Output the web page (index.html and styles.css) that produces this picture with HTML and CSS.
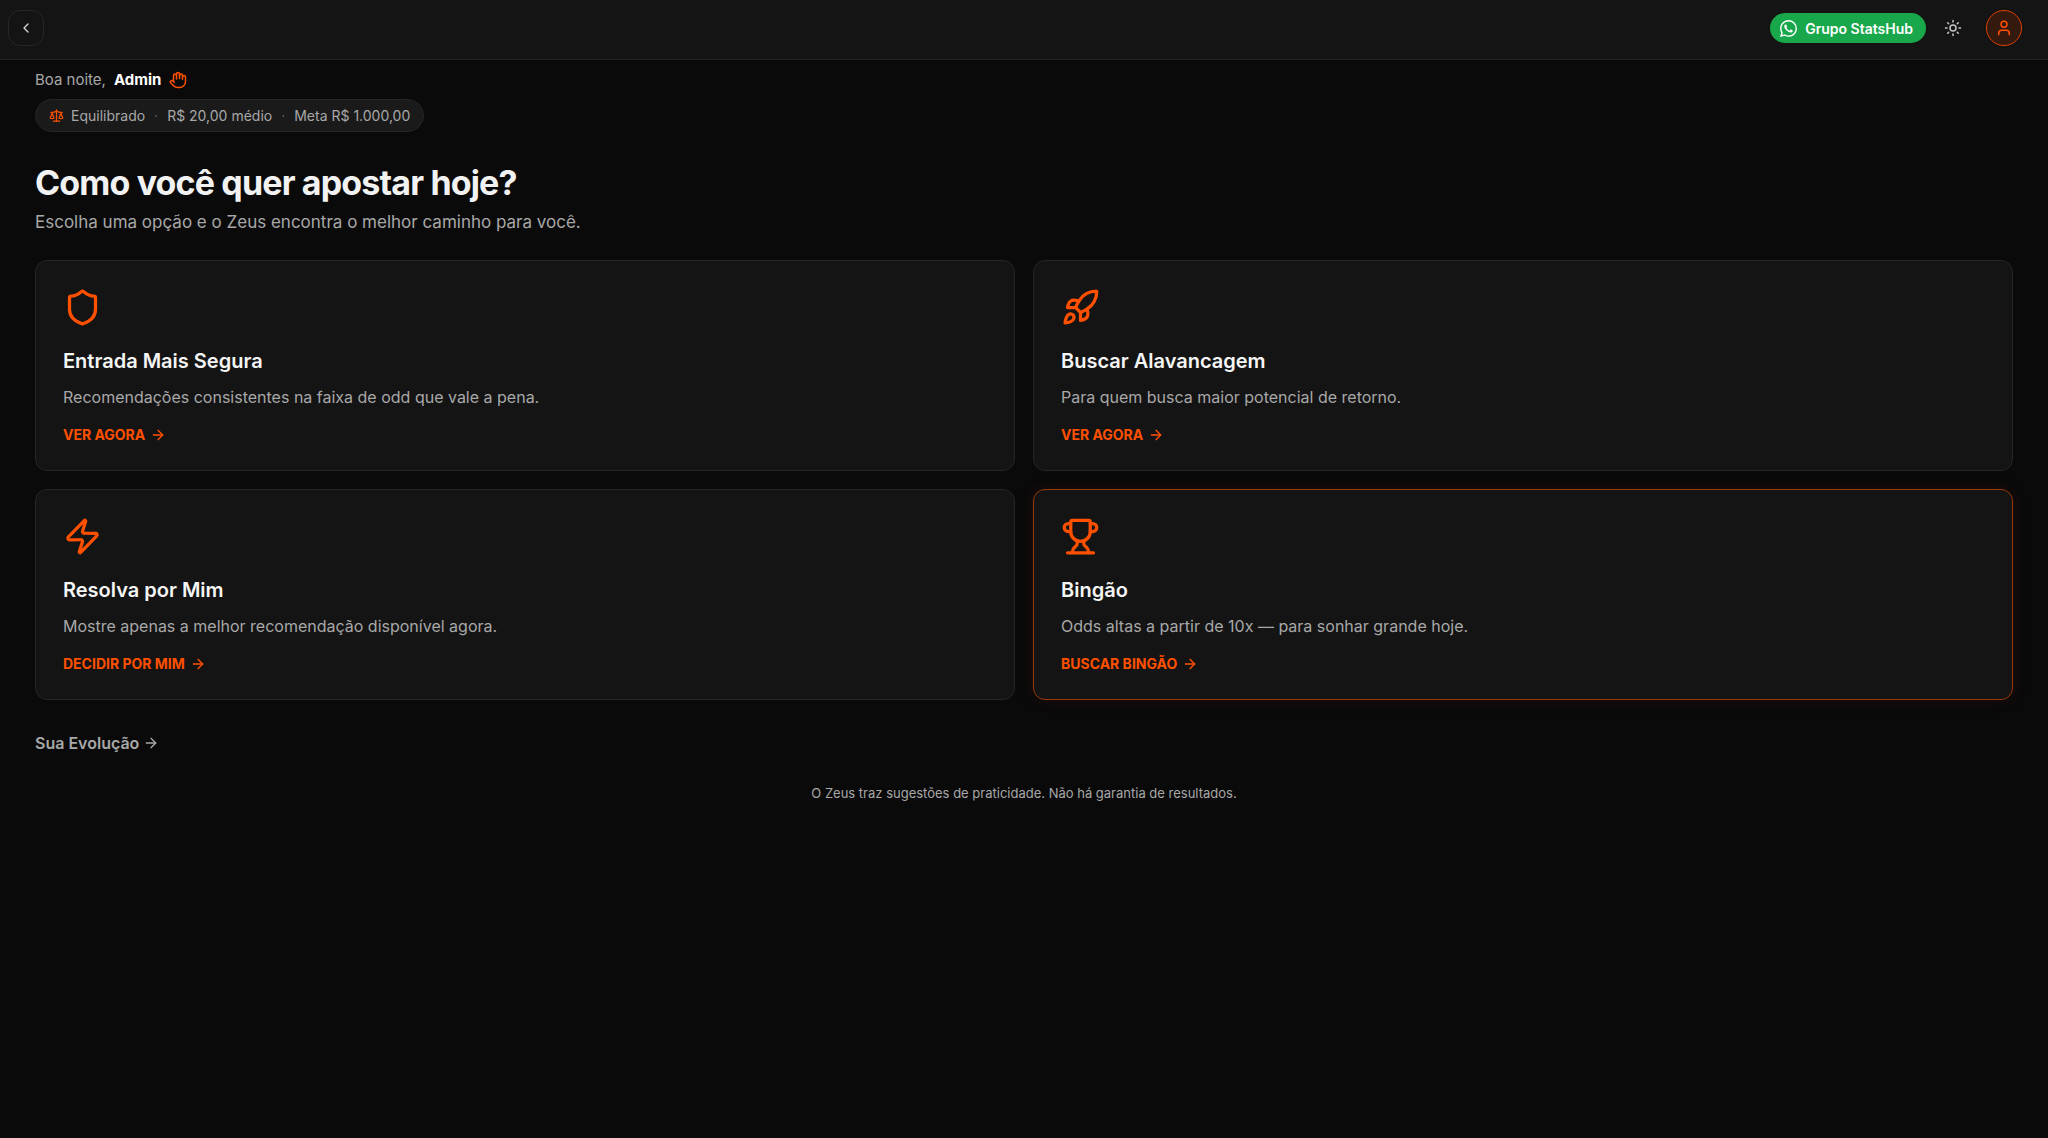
FILE: index.html
```html
<!DOCTYPE html>
<html lang="pt-BR">
<head>
  <meta charset="UTF-8">
  <meta name="viewport" content="width=device-width, initial-scale=1.0">
  <title>Zeus - StatsHub</title>
  <link rel="stylesheet" href="styles.css">
</head>
<body>
  <header class="topbar">
    <button class="back-btn" type="button" aria-label="Voltar">
      <svg class="icon icon-sm" viewBox="0 0 24 24"><path d="m15 18-6-6 6-6"/></svg>
    </button>
    <div class="topbar-actions">
      <a class="group-btn" href="#">
        <svg class="whatsapp" viewBox="0 0 24 24"><path d="M17.472 14.382c-.297-.149-1.758-.867-2.03-.967-.273-.099-.471-.148-.67.15-.197.297-.767.966-.94 1.164-.173.199-.347.223-.644.075-.297-.15-1.255-.463-2.39-1.475-.883-.788-1.48-1.761-1.653-2.059-.173-.297-.018-.458.13-.606.134-.133.298-.347.446-.52.149-.174.198-.298.298-.497.099-.198.05-.371-.025-.52-.075-.149-.669-1.612-.916-2.207-.242-.579-.487-.5-.669-.51-.173-.008-.371-.01-.57-.01-.198 0-.52.074-.792.372-.272.297-1.04 1.016-1.04 2.479 0 1.462 1.065 2.875 1.213 3.074.149.198 2.096 3.2 5.077 4.487.709.306 1.262.489 1.694.625.712.227 1.36.195 1.871.118.571-.085 1.758-.719 2.006-1.413.248-.694.248-1.289.173-1.413-.074-.124-.272-.198-.57-.347m-5.421 7.403h-.004a9.87 9.87 0 0 1-5.031-1.378l-.361-.214-3.741.982.998-3.648-.235-.374a9.86 9.86 0 0 1-1.51-5.26c.001-5.45 4.436-9.884 9.888-9.884 2.64 0 5.122 1.03 6.988 2.898a9.825 9.825 0 0 1 2.893 6.994c-.003 5.45-4.437 9.884-9.885 9.884m8.413-18.297A11.815 11.815 0 0 0 12.05 0C5.495 0 .16 5.335.157 11.892c0 2.096.547 4.142 1.588 5.945L.057 24l6.305-1.654a11.882 11.882 0 0 0 5.683 1.448h.005c6.554 0 11.89-5.335 11.893-11.893a11.821 11.821 0 0 0-3.48-8.413Z"/></svg>
        Grupo StatsHub
      </a>
      <button class="theme-btn" type="button" aria-label="Alternar tema">
        <svg class="icon icon-md" viewBox="0 0 24 24"><circle cx="12" cy="12" r="4"/><path d="M12 2v2M12 20v2M4.93 4.93l1.41 1.41M17.66 17.66l1.41 1.41M2 12h2M20 12h2M6.34 17.66l-1.41 1.41M19.07 4.93l-1.41 1.41"/></svg>
      </button>
      <button class="avatar" type="button" aria-label="Perfil">
        <svg class="icon icon-md" viewBox="0 0 24 24"><path d="M19 21v-2a4 4 0 0 0-4-4H9a4 4 0 0 0-4 4v2"/><circle cx="12" cy="7" r="4"/></svg>
      </button>
    </div>
  </header>

  <main class="container">
    <p class="greeting">
      Boa noite, <strong>Admin</strong>
      <svg class="icon icon-md" viewBox="0 0 24 24"><path d="M18 11V6a2 2 0 0 0-2-2a2 2 0 0 0-2 2"/><path d="M14 10V4a2 2 0 0 0-2-2a2 2 0 0 0-2 2v2"/><path d="M10 10.5V6a2 2 0 0 0-2-2a2 2 0 0 0-2 2v8"/><path d="M18 8a2 2 0 1 1 4 0v6a8 8 0 0 1-8 8h-2c-2.8 0-4.5-.86-5.99-2.34l-3.6-3.6a2 2 0 0 1 2.83-2.82L7 15"/></svg>
    </p>

    <button class="profile-chip" type="button">
      <svg class="icon icon-xs" viewBox="0 0 24 24"><path d="m16 16 3-8 3 8c-.87.65-1.92 1-3 1s-2.13-.35-3-1Z"/><path d="m2 16 3-8 3 8c-.87.65-1.92 1-3 1s-2.13-.35-3-1Z"/><path d="M7 21h10"/><path d="M12 3v18"/><path d="M3 7h2c2 0 5-1 7-2 2 1 5 2 7 2h2"/></svg>
      <span>Equilibrado</span>
      <span class="dot">·</span>
      <span>R$ 20,00 médio</span>
      <span class="dot">·</span>
      <span>Meta R$ 1.000,00</span>
    </button>

    <h1>Como você quer apostar hoje?</h1>
    <p class="subtitle">Escolha uma opção e o Zeus encontra o melhor caminho para você.</p>

    <div class="cards">
      <a class="card" href="#">
        <svg class="icon icon-xl" viewBox="0 0 24 24"><path d="M20 13c0 5-3.5 7.5-7.66 8.95a1 1 0 0 1-.67-.01C7.5 20.5 4 18 4 13V6a1 1 0 0 1 1-1c2 0 4.5-1.2 6.24-2.72a1.17 1.17 0 0 1 1.52 0C14.51 3.81 17 5 19 5a1 1 0 0 1 1 1z"/></svg>
        <h2>Entrada Mais Segura</h2>
        <p>Recomendações consistentes na faixa de odd que vale a pena.</p>
        <span class="card-link">VER AGORA
          <svg class="icon icon-sm" viewBox="0 0 24 24"><path d="M5 12h14"/><path d="m12 5 7 7-7 7"/></svg>
        </span>
      </a>

      <a class="card" href="#">
        <svg class="icon icon-xl" viewBox="0 0 24 24"><path d="M4.5 16.5c-1.5 1.26-2 5-2 5s3.74-.5 5-2c.71-.84.7-2.13-.09-2.91a2.18 2.18 0 0 0-2.91-.09z"/><path d="m12 15-3-3a22 22 0 0 1 2-3.95A12.88 12.88 0 0 1 22 2c0 2.72-.78 7.5-6 11a22.35 22.35 0 0 1-4 2z"/><path d="M9 12H4s.55-3.03 2-4c1.62-1.08 5 0 5 0"/><path d="M12 15v5s3.03-.55 4-2c1.08-1.62 0-5 0-5"/></svg>
        <h2>Buscar Alavancagem</h2>
        <p>Para quem busca maior potencial de retorno.</p>
        <span class="card-link">VER AGORA
          <svg class="icon icon-sm" viewBox="0 0 24 24"><path d="M5 12h14"/><path d="m12 5 7 7-7 7"/></svg>
        </span>
      </a>

      <a class="card" href="#">
        <svg class="icon icon-xl" viewBox="0 0 24 24"><path d="M4 14a1 1 0 0 1-.78-1.63l9.9-10.2a.5.5 0 0 1 .86.46l-1.92 6.02A1 1 0 0 0 13 10h7a1 1 0 0 1 .78 1.63l-9.9 10.2a.5.5 0 0 1-.86-.46l1.92-6.02A1 1 0 0 0 11 14z"/></svg>
        <h2>Resolva por Mim</h2>
        <p>Mostre apenas a melhor recomendação disponível agora.</p>
        <span class="card-link">DECIDIR POR MIM
          <svg class="icon icon-sm" viewBox="0 0 24 24"><path d="M5 12h14"/><path d="m12 5 7 7-7 7"/></svg>
        </span>
      </a>

      <a class="card card-highlight" href="#">
        <svg class="icon icon-xl" viewBox="0 0 24 24"><path d="M10 14.66v1.626a2 2 0 0 1-.976 1.696A5 5 0 0 0 7 21.978"/><path d="M14 14.66v1.626a2 2 0 0 0 .976 1.696A5 5 0 0 1 17 21.978"/><path d="M18 9h1.5a1 1 0 0 0 0-5H18"/><path d="M4 22h16"/><path d="M6 9a6 6 0 0 0 12 0V3a1 1 0 0 0-1-1H7a1 1 0 0 0-1 1z"/><path d="M6 9H4.5a1 1 0 0 1 0-5H6"/></svg>
        <h2>Bingão</h2>
        <p>Odds altas a partir de 10x — para sonhar grande hoje.</p>
        <span class="card-link">BUSCAR BINGÃO
          <svg class="icon icon-sm" viewBox="0 0 24 24"><path d="M5 12h14"/><path d="m12 5 7 7-7 7"/></svg>
        </span>
      </a>
    </div>

    <a class="evolution" href="#">Sua Evolução
      <svg class="icon icon-sm" viewBox="0 0 24 24"><path d="M5 12h14"/><path d="m12 5 7 7-7 7"/></svg>
    </a>

    <p class="disclaimer">O Zeus traz sugestões de praticidade. Não há garantia de resultados.</p>
  </main>
</body>
</html>
```
FILE: styles.css
```css
* {
    margin: 0;
    padding: 0;
    box-sizing: border-box;
}

body {
    font-family: Inter, sans-serif;
    background: #0a0a0a;
    color: #a8a8a8;
    min-height: 100vh;
}

a {
    color: inherit;
    text-decoration: none;
}

button {
    font-family: inherit;
    color: inherit;
    background: none;
    border: none;
    cursor: pointer;
}

/* Icons */
.icon {
    display: block;
    flex-shrink: 0;
    fill: none;
    stroke: currentColor;
    stroke-width: 2;
    stroke-linecap: round;
    stroke-linejoin: round;
}

.icon-xs {
    width: 15px;
    height: 15px;
}

.icon-sm {
    width: 16px;
    height: 16px;
}

.icon-md {
    width: 18px;
    height: 18px;
}

.icon-xl {
    width: 39px;
    height: 39px;
}

/* Top bar */
.topbar {
    display: flex;
    justify-content: space-between;
    align-items: center;
    padding: 10px 26px 13px 8px;
    background: #141414;
    border-bottom: 1px solid #242424;
}

.back-btn {
    display: flex;
    align-items: center;
    justify-content: center;
    width: 36px;
    height: 36px;
    border: 1px solid #262626;
    border-radius: 12px;
    color: #d4d4d4;
}

.topbar-actions {
    display: flex;
    align-items: center;
}

.group-btn {
    display: flex;
    align-items: center;
    gap: 8px;
    height: 30px;
    padding: 0 13px 0 10px;
    margin-right: 9px;
    border-radius: 15px;
    background: #18a84b;
    color: #fff;
    font-size: 14px;
    font-weight: 600;
}

.whatsapp {
    width: 17px;
    height: 17px;
    fill: currentColor;
}

.theme-btn,
.avatar {
    display: flex;
    align-items: center;
    justify-content: center;
    width: 36px;
    height: 36px;
    border-radius: 50%;
}

.theme-btn {
    margin-right: 15px;
    color: #c4c4c4;
}

.avatar {
    border: 1px solid #d94400;
    background: #34190e;
    color: #ff5000;
}

/* Page content */
.container {
    padding: 8px 35px 35px;
}

.greeting {
    display: flex;
    align-items: center;
    gap: 8px;
    font-size: 15px;
    line-height: 24px;
}

.greeting strong {
    color: #fff;
    font-weight: 700;
}

.greeting .icon,
.profile-chip .icon {
    color: #ff5000;
}

.profile-chip {
    display: flex;
    align-items: center;
    gap: 9px;
    height: 33px;
    margin-top: 7px;
    padding: 0 13px;
    border: 1px solid #262626;
    border-radius: 17px;
    background: #1a1a1a;
    font-size: 14px;
}

.profile-chip .icon {
    margin-right: -2px;
}

.dot {
    color: #666;
}

h1 {
    margin-top: 31px;
    color: #f2f2f2;
    font-size: 34px;
    font-weight: 700;
    line-height: 40px;
    letter-spacing: -0.025em;
}

.subtitle {
    margin-top: 6px;
    font-size: 17px;
    line-height: 26px;
}

/* Option cards */
.cards {
    display: grid;
    grid-template-columns: 1fr 1fr;
    gap: 18px;
    margin-top: 25px;
}

.card {
    padding: 27px 27px 25px;
    border: 1px solid #262626;
    border-radius: 12px;
    background: #141414;
}

.card > .icon {
    color: #ff5000;
}

.card h2 {
    margin-top: 20px;
    color: #f5f5f5;
    font-size: 20px;
    font-weight: 600;
    line-height: 28px;
}

.card p {
    margin-top: 9px;
    font-size: 16px;
    line-height: 26px;
}

.card-link {
    display: flex;
    align-items: center;
    gap: 5px;
    margin-top: 15px;
    color: #ff5000;
    font-size: 14px;
    font-weight: 700;
    line-height: 20px;
}

.card-highlight {
    border-color: #993707;
    box-shadow: 0 0 16px rgba(255, 80, 0, 0.08);
}

.evolution {
    display: inline-flex;
    align-items: center;
    gap: 4px;
    margin-top: 31px;
    font-size: 16px;
    font-weight: 600;
    line-height: 24px;
}

.disclaimer {
    margin-top: 28px;
    font-size: 13px;
    line-height: 20px;
    text-align: center;
}
```
